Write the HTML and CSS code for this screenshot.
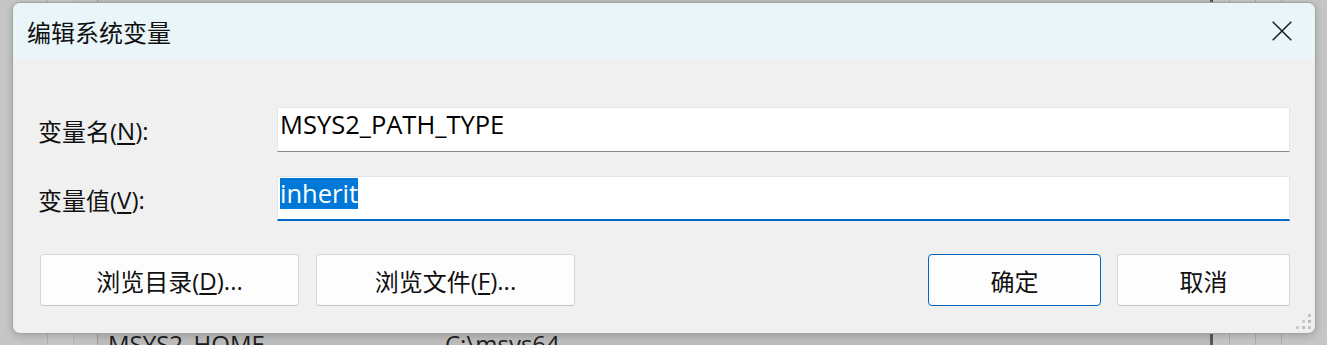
FILE: index.html
```html
<!DOCTYPE html>
<html lang="zh-CN">
<head>
<meta charset="utf-8">
<title>编辑系统变量</title>
<link rel="stylesheet" href="styles.css">
</head>
<body>
<div class="screen">
  <div class="backdrop">
    <div class="bcol bcol-a"></div>
    <div class="bcol bcol-b"></div>
    <div class="bcol bcol-c"></div>
    <div class="blist">
      <div class="brow"><span class="bname">MSYS2_HOME</span><span class="bval">C:\msys64</span></div>
    </div>
    <div class="bside">
      <div class="bs bs1"></div>
      <div class="bs"></div>
      <div class="bs"></div>
    </div>
  </div>

  <div class="dialog">
    <div class="titlebar">
      <span class="title">编辑系统变量</span>
      <span class="close" aria-label="关闭">
        <svg width="20" height="20" viewBox="0 0 20 20"><path d="M0.7 0.7 L19.3 19.3 M19.3 0.7 L0.7 19.3" stroke="#1c1c1c" stroke-width="1.5" fill="none"/></svg>
      </span>
    </div>
    <div class="content">
      <div class="fields">
        <label class="label">变量名(<u>N</u>):</label>
        <div class="field">MSYS2_PATH_TYPE</div>
        <label class="label">变量值(<u>V</u>):</label>
        <div class="field focused"><span class="sel">inherit</span></div>
      </div>
      <div class="actions">
        <div class="btn wide">浏览目录(<u>D</u>)...</div>
        <div class="btn wide">浏览文件(<u>F</u>)...</div>
        <div class="spacer"></div>
        <div class="right-group">
          <div class="btn narrow default">确定</div>
          <div class="btn narrow">取消</div>
        </div>
      </div>
    </div>
    <svg class="grip" width="17" height="17" viewBox="0 0 17 17">
      <rect x="13" y="1" width="3" height="3" fill="#c4c4c4"/>
      <rect x="7" y="7" width="3" height="3" fill="#cfcfcf"/>
      <rect x="13" y="7" width="3" height="3" fill="#bcbcbc"/>
      <rect x="1" y="13" width="3" height="3" fill="#cdcdcd"/>
      <rect x="7" y="13" width="3" height="3" fill="#bdbdbd"/>
      <rect x="13" y="13" width="3" height="3" fill="#c6c6c6"/>
    </svg>
  </div>
</div>
</body>
</html>
```
FILE: styles.css
```css
* { box-sizing: border-box; }
html, body { margin: 0; padding: 0; }
body {
  width: 1327px;
  height: 345px;
  overflow: hidden;
  font-family: "Open Sans", "Noto Sans CJK SC", sans-serif;
  color: #111;
}
.screen {
  position: relative;
  width: 1327px;
  height: 345px;
  overflow: hidden;
  background: #c4c4c4;
}

/* dimmed window behind the dialog */
.backdrop { display: flex; height: 100%; }
.bcol { height: 100%; }
.bcol-a { width: 48px; background: #c6c6c6; border-right: 1px solid #b2b2b2; }
.bcol-b { width: 26px; background: #c8c8c8; border-right: 1px solid #b8b8b8; }
.bcol-c { width: 24px; background: #c4c4c4; border-right: 1px solid #999; }
.blist { flex: 1; background: #bdbdbd; padding-top: 329px; }
.brow {
  display: flex;
  font-size: 24px;
  line-height: 30px;
  padding-left: 10px;
  color: #1e1e1e;
  white-space: nowrap;
}
.bname { width: 337px; }
.bside { width: 117px; display: flex; border-left: 3px solid #575757; background: #c6c6c6; }
.bs { width: 26px; height: 100%; border-right: 1px solid #ababab; }
.bs1 { width: 17px; }

/* dialog */
.dialog {
  position: absolute;
  left: 12px;
  top: 2px;
  width: 1304px;
  height: 332px;
  border: 1px solid #a3a3a3;
  border-radius: 8px;
  background: #f0f0f0;
  overflow: hidden;
  box-shadow: 0 2px 8px rgba(0, 0, 0, 0.18);
  display: flex;
  flex-direction: column;
}
.titlebar {
  flex: none;
  height: 56px;
  background: #e9f5f8;
  display: flex;
  align-items: center;
  justify-content: space-between;
  padding: 0 23px 0 14px;
}
.title {
  font-family: "Noto Sans CJK SC", sans-serif;
  font-size: 24px;
  color: #111;
}
.close { display: flex; }

.content { padding: 48px 25px 0 25px; }
.fields {
  display: grid;
  grid-template-columns: 239px 1fr;
  grid-auto-rows: 45px;
  row-gap: 24px;
}
.label {
  display: flex;
  align-items: center;
  font-size: 24px;
  color: #111;
  padding-top: 2px;
}
.label u, .btn u { text-underline-offset: 3px; }
.field {
  background: #fff;
  border: 1px solid #e6e6e6;
  border-bottom: 1px solid #868686;
  padding: 1px 2px 0;
  font-size: 25.5px;
  line-height: 31px;
  color: #000;
  white-space: nowrap;
}
.field.focused {
  border-color: #e1e6ee;
  border-bottom: 2px solid #0067c0;
}
.sel {
  display: inline-block;
  vertical-align: top;
  line-height: 31px;
  background: #0078d7;
  color: #fff;
}

.actions {
  display: flex;
  margin-top: 33px;
  padding-left: 2px;
  gap: 17px;
}
.spacer { flex: 1; }
.right-group { display: flex; gap: 16px; }
.btn {
  height: 52px;
  background: #fdfdfd;
  border: 1px solid #d6d6d6;
  border-bottom-color: #c4c4c4;
  border-radius: 4px;
  font-size: 24px;
  color: #111;
  display: flex;
  align-items: center;
  justify-content: center;
}
.btn.wide { width: 259px; }
.btn.narrow { width: 173px; }
.btn.default { border-color: #0067c0; }

.grip {
  position: absolute;
  right: 3px;
  bottom: 3px;
}
```
